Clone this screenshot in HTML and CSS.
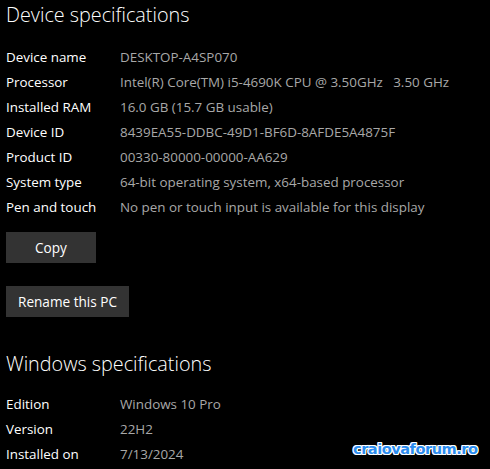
FILE: index.html
```html
<!DOCTYPE html>
<html lang="en">
<head>
  <meta charset="UTF-8" />
  <meta name="viewport" content="width=device-width, initial-scale=1.0" />
  <title>About</title>
  <link rel="stylesheet" href="styles.css">
</head>
<body>
  <section class="specs">
    <h2>Device specifications</h2>
    <div class="rows">
      <div class="row"><span class="label">Device name</span><span class="value">DESKTOP-A4SP070</span></div>
      <div class="row"><span class="label">Processor</span><span class="value">Intel(R) Core(TM) i5-4690K CPU @ 3.50GHz&nbsp;&nbsp;&nbsp;3.50 GHz</span></div>
      <div class="row"><span class="label">Installed RAM</span><span class="value">16.0 GB (15.7 GB usable)</span></div>
      <div class="row"><span class="label">Device ID</span><span class="value">8439EA55-DDBC-49D1-BF6D-8AFDE5A4875F</span></div>
      <div class="row"><span class="label">Product ID</span><span class="value">00330-80000-00000-AA629</span></div>
      <div class="row"><span class="label">System type</span><span class="value">64-bit operating system, x64-based processor</span></div>
      <div class="row"><span class="label">Pen and touch</span><span class="value">No pen or touch input is available for this display</span></div>
    </div>
    <button class="btn copy">Copy</button>
    <button class="btn">Rename this PC</button>
  </section>

  <section class="specs win">
    <h2>Windows specifications</h2>
    <div class="rows">
      <div class="row"><span class="label">Edition</span><span class="value">Windows 10 Pro</span></div>
      <div class="row"><span class="label">Version</span><span class="value">22H2</span></div>
      <div class="row"><span class="label">Installed on</span><span class="value">7/13/2024</span></div>
    </div>
  </section>

  <div class="watermark">craiovaforum.ro</div>
</body>
</html>
```

FILE: styles.css
```css
body {
  margin: 0;
  background: #000;
  color: #fff;
  font-family: "Open Sans", sans-serif;
  font-size: 13.4px;
  overflow: hidden;
  position: relative;
  height: 469px;
}
.specs {
  padding: 0 6px;
}
h2 {
  margin: 0;
  padding-top: 1px;
  font-size: 19.8px;
  font-weight: 300;
  line-height: 28px;
}
.rows {
  margin-top: 16px;
}
.row {
  display: flex;
  height: 25px;
  line-height: 25px;
}
.label {
  width: 114px;
  flex-shrink: 0;
}
.value {
  color: #a8a8a8;
  white-space: nowrap;
}
.btn {
  display: block;
  background: #333;
  color: #fff;
  border: none;
  font-family: inherit;
  font-size: 13.6px;
  height: 31px;
  padding: 0 12px;
  margin-top: 12px;
}
.copy {
  width: 90px;
}
.btn + .btn {
  margin-top: 23px;
}
.win {
  margin-top: 32px;
}
.win .rows {
  margin-top: 14px;
}
.watermark {
  position: absolute;
  left: 353px;
  top: 440px;
  color: #2a8cf0;
  font-family: "DejaVu Sans", sans-serif;
  font-weight: bold;
  font-size: 14.6px;
  letter-spacing: -0.5px;
  text-shadow: 1px 0 #fff, -1px 0 #fff, 0 1px #fff, 0 -1px #fff, 1px 1px #fff, -1px -1px #fff, 1px -1px #fff, -1px 1px #fff;
}
```
